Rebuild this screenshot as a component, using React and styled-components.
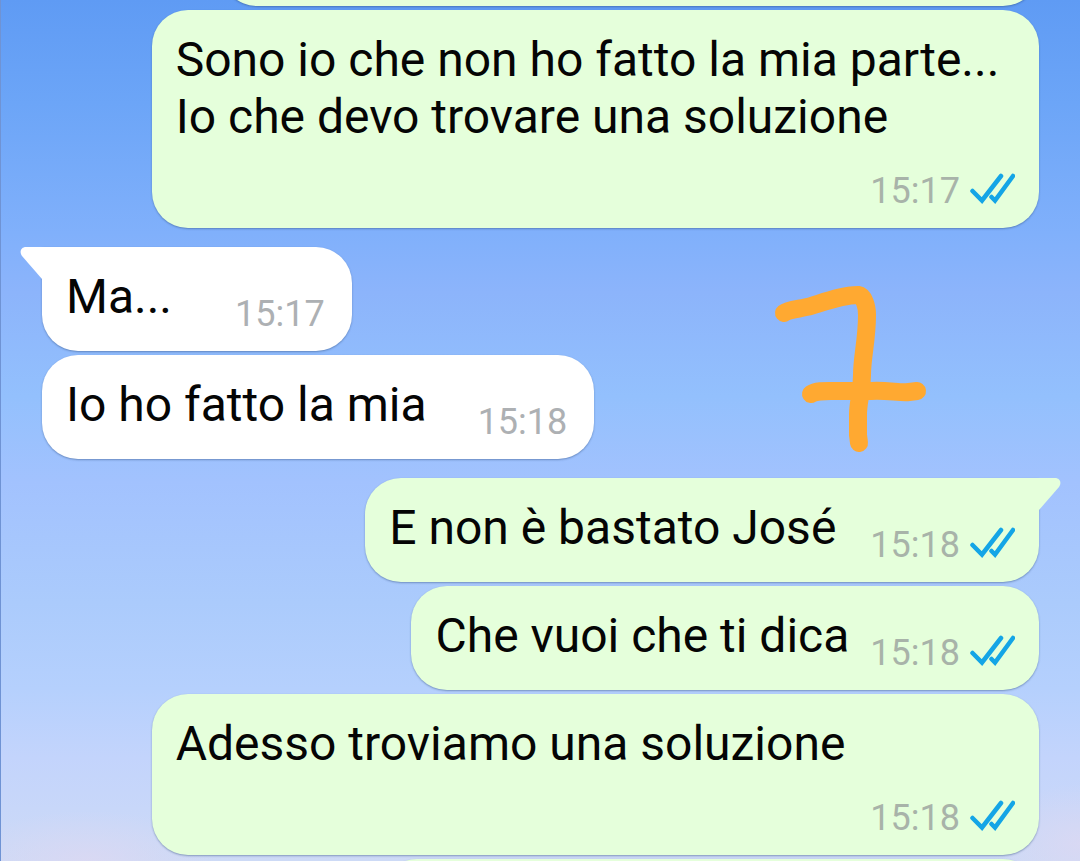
import styled, { createGlobalStyle } from 'styled-components';

const GlobalStyle = createGlobalStyle`
    * {
        box-sizing: border-box;
    }

    body {
        margin: 0;
        font-family: Roboto, "Liberation Sans", sans-serif;
    }
`;

const Chat = styled.main`
    position: relative;
    height: 100vh;
    overflow: hidden;
    padding: 0 41px;
    border-left: 1px solid #6f93d4;
    background:
        radial-gradient(ellipse 130px 50px at 8% 100%, rgba(222, 216, 242, 0.7), transparent),
        radial-gradient(ellipse 90px 60px at 100% 98%, rgba(222, 216, 242, 0.7), transparent),
        linear-gradient(
            180deg,
            #5f9bf4 0%,
            #6ca5f7 12%,
            #80b0fb 27%,
            #8cb4fb 34%,
            #93c0fd 46%,
            #a2c2fe 56%,
            #abcbfc 70%,
            #b5d0fd 80%,
            #c3d4fc 88%,
            #cddaf6 100%
        );
`;

const Group = styled.ul`
    display: flex;
    flex-direction: column;
    align-items: ${({ $mine }) => ($mine ? 'flex-end' : 'flex-start')};
    gap: 4px;
    list-style: none;
    margin: 0 0 19px;
    padding: 0;

    &:first-of-type {
        margin-top: -98px;
    }
`;

const Bubble = styled.li`
    position: relative;
    display: flex;
    flex-wrap: ${({ $wide }) => ($wide ? 'wrap' : 'nowrap')};
    justify-content: flex-end;
    gap: 15px ${({ $gap }) => $gap || 0}px;
    width: ${({ $wide }) => ($wide ? '89%' : 'auto')};
    padding: 21px ${({ $mine }) => ($mine ? 24 : 27)}px 16px 24px;
    border-radius: 36px;
    ${({ $tail }) => $tail === 'left' && 'border-top-left-radius: 0;'}
    ${({ $tail }) => $tail === 'right' && 'border-top-right-radius: 0;'}
    background: ${({ $mine }) => ($mine ? '#e5ffdb' : '#ffffff')};
    box-shadow: 0 1px 2px rgba(40, 70, 120, 0.45);
`;

const ClippedBubble = styled(Bubble)`
    width: ${({ $width }) => $width};
    height: 104px;
`;

const Text = styled.p`
    flex: ${({ $wide }) => ($wide ? '0 0 100%' : 'none')};
    margin: 0;
    padding-bottom: 10px;
    font-size: 48px;
    line-height: 57px;
    color: #050505;
    white-space: pre-line;
`;

const Meta = styled.div`
    display: flex;
    align-items: center;
    align-self: flex-end;
    gap: 10px;
    font-size: 36px;
    line-height: 42px;
    color: ${({ $mine }) => ($mine ? '#a8b3a9' : '#adb0b3')};
`;

const Ticks = styled.svg`
    display: block;
    width: 45px;
    height: 32px;
    margin-bottom: 4px;
`;

const TailShape = styled.svg`
    position: absolute;
    top: 0;
    ${({ $side }) => $side}: -22px;
    width: 23px;
    height: 34px;
    transform: ${({ $side }) => ($side === 'right' ? 'scaleX(-1)' : 'none')};
`;

// hand drawn number on top of the chat
const Drawing = styled.svg`
    position: absolute;
    top: 280px;
    right: 149px;
    width: 160px;
    height: 180px;
    pointer-events: none;
`;

const groups = [
    {
        mine: true,
        clippedBefore: '82%',
        messages: [
            {
                text: 'Sono io che non ho fatto la mia parte...\nIo che devo trovare una soluzione',
                time: '15:17',
                wide: true,
            },
        ],
    },
    {
        mine: false,
        messages: [
            { text: 'Ma...', time: '15:17', gap: 63, tail: 'left' },
            { text: 'Io ho fatto la mia', time: '15:18', gap: 51 },
        ],
    },
    {
        mine: true,
        clippedAfter: '66%',
        messages: [
            { text: 'E non è bastato José', time: '15:18', gap: 34, tail: 'right' },
            { text: 'Che vuoi che ti dica', time: '15:18', gap: 21 },
            { text: 'Adesso troviamo una soluzione', time: '15:18', wide: true },
        ],
    },
];

const ReadTicks = () => (
    <Ticks viewBox="0 0 45 32" role="img" aria-label="Letto">
        <g fill="none" stroke="#14a5e6" strokeWidth="4.5" strokeLinecap="round">
            <path d="M2.5 18 L12 27.5 L31 3" />
            <path d="M21.5 24 L25 27.5 L43 3" />
        </g>
    </Ticks>
);

const Tail = ({ side, color }) => (
    <TailShape $side={side} viewBox="0 0 23 34" aria-hidden="true">
        <path d="M23 0 H6 C1 0 -1 5 2 9 L22 32 H23 Z" fill={color} />
    </TailShape>
);

const Message = ({ message, mine }) => (
    <Bubble $mine={mine} $wide={message.wide} $gap={message.gap} $tail={message.tail}>
        {message.tail && <Tail side={message.tail} color={mine ? '#e5ffdb' : '#ffffff'} />}
        <Text $wide={message.wide}>{message.text}</Text>
        <Meta $mine={mine}>
            <time>{message.time}</time>
            {mine && <ReadTicks />}
        </Meta>
    </Bubble>
);

const App = () => (
    <>
        <GlobalStyle />
        <Chat>
            {groups.map((group, index) => (
                <Group key={index} $mine={group.mine}>
                    {group.clippedBefore && <ClippedBubble $mine $width={group.clippedBefore} aria-hidden="true" />}
                    {group.messages.map((message) => (
                        <Message key={message.text} message={message} mine={group.mine} />
                    ))}
                    {group.clippedAfter && <ClippedBubble $mine $width={group.clippedAfter} aria-hidden="true" />}
                </Group>
            ))}
            <Drawing viewBox="770 280 160 180" aria-hidden="true">
                <g fill="none" stroke="#ffa931" strokeWidth="18" strokeLinecap="round" strokeLinejoin="round">
                    <path d="M783 313 C788 309 800 309 810 306 C826 301 842 295 857 295 C863 296 866 306 866 315 C866 340 861 357 861 375 C861 394 857 400 857 415 L857 435 L858 443" />
                    <path d="M810 394 C816 390 825 391 840 391 L870 391 C885 390 900 393 908 392 L916 391" />
                </g>
            </Drawing>
        </Chat>
    </>
);

export default App;
